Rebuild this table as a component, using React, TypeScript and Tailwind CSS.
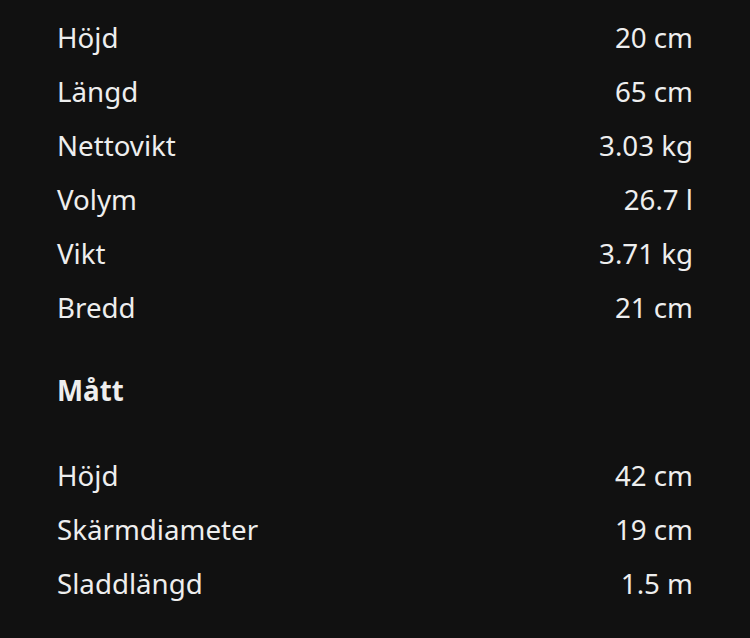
const groupOne = [
  { label: "Höjd", value: "20 cm" },
  { label: "Längd", value: "65 cm" },
  { label: "Nettovikt", value: "3.03 kg" },
  { label: "Volym", value: "26.7 l" },
  { label: "Vikt", value: "3.71 kg" },
  { label: "Bredd", value: "21 cm" },
];

const groupTwo = [
  { label: "Höjd", value: "42 cm" },
  { label: "Skärmdiameter", value: "19 cm" },
  { label: "Sladdlängd", value: "1.5 m" },
];

function Row({ label, value }: { label: string; value: string }) {
  return (
    <div className="flex h-[54px] items-center justify-between">
      <span>{label}</span>
      <span>{value}</span>
    </div>
  );
}

export default function App() {
  return (
    <div className="min-h-[638px] w-full bg-[#111111] pl-[57px] pr-[57px] pt-[10px] text-[27.7px] leading-[38px] text-[#eeeeee] [font-family:'Noto_Sans',sans-serif]">
      {groupOne.map((r) => (
        <Row key={r.label} {...r} />
      ))}

      <div className="mt-[29px] flex h-[54px] items-center font-bold">Mått</div>

      <div className="mt-[31px]">
        {groupTwo.map((r) => (
          <Row key={r.label} {...r} />
        ))}
      </div>
    </div>
  );
}
